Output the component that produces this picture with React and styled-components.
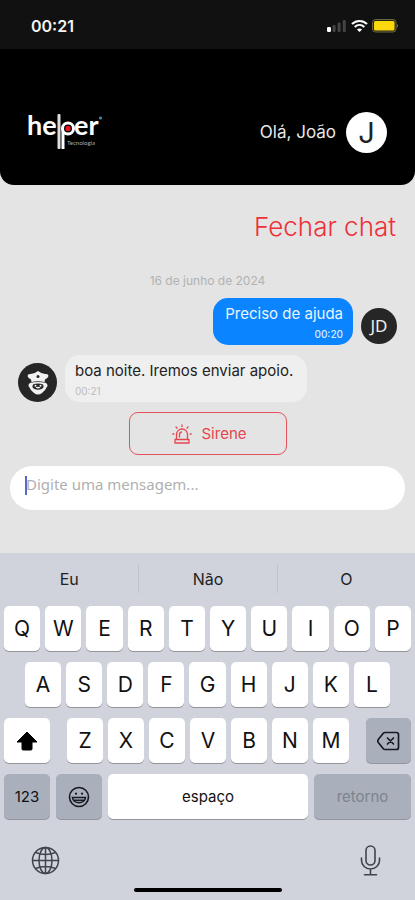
import React from "react";
import styled, { createGlobalStyle, css } from "styled-components";

const GlobalStyle = createGlobalStyle`
  * { box-sizing: border-box; }
  body {
    margin: 0;
    background: #d0d3dc;
    font-family: Inter, "Liberation Sans", sans-serif;
  }
  button, textarea { font: inherit; }
`;

const Screen = styled.div`
  display: flex;
  flex-direction: column;
  min-height: 100vh;
  background: #e4e4e4;
`;

const StatusBar = styled.div`
  display: flex;
  align-items: center;
  justify-content: space-between;
  height: 49px;
  padding: 2px 16px 0 31px;
  background: #111;
  color: #f4f4f4;
`;

const Clock = styled.time`
  font-size: 16px;
  font-weight: 600;
`;

const StatusIcons = styled.div`
  display: flex;
  align-items: center;
  gap: 4px;
`;

const Header = styled.header`
  display: flex;
  align-items: center;
  justify-content: space-between;
  height: 136px;
  padding: 30px 28px 0;
  background: #000;
  border-radius: 0 0 14px 14px;
`;

const Logo = styled.svg`
  display: block;
  overflow: visible;
  font-family: Lato, sans-serif;
`;

const Profile = styled.div`
  display: flex;
  align-items: center;
  gap: 10px;
  color: #e8e8e8;
  font-size: 17px;
`;

const Initial = styled.span`
  display: grid;
  place-items: center;
  width: 41px;
  height: 41px;
  border-radius: 50%;
  background: #fff;
  color: #222;
  font-size: 29px;
`;

const Chat = styled.main`
  display: flex;
  flex: 1;
  flex-direction: column;
  padding: 26px 10px 43px;
`;

const CloseButton = styled.button`
  align-self: flex-end;
  margin-right: 9px;
  padding: 0;
  border: 0;
  background: none;
  color: #ee3038;
  font-size: 26px;
  font-weight: 300;
  line-height: 32px;
`;

const DateLabel = styled.p`
  margin: 30px 0 9px;
  color: #b2b2b2;
  font-size: 12px;
  line-height: 16px;
  text-align: center;
`;

const Message = styled.div`
  display: flex;
  align-items: center;
  gap: 8px;
  margin-bottom: 10px;
  padding: 0 8px;
  flex-direction: ${(p) => (p.$mine ? "row-reverse" : "row")};
`;

const Bubble = styled.div`
  height: 47px;
  padding: ${(p) => (p.$mine ? "5px 10px 5px 12px" : "5px 14px 5px 10px")};
  border-radius: 15px;
  background: ${(p) => (p.$mine ? "#0a84ff" : "#efefef")};
  color: ${(p) => (p.$mine ? "#eaf4ff" : "#222")};
  font-size: 15px;
  line-height: 22px;
  text-align: ${(p) => (p.$mine ? "right" : "left")};
`;

const Sent = styled.time`
  display: block;
  color: ${(p) => (p.$mine ? "#d5eaff" : "#bdbdbd")};
  font-size: 10px;
  font-weight: ${(p) => (p.$mine ? 500 : 400)};
  line-height: 18px;
`;

const Avatar = styled.span`
  display: grid;
  flex: none;
  place-items: center;
  width: ${(p) => p.$size}px;
  height: ${(p) => p.$size}px;
  margin-top: 8px;
  border-radius: 50%;
  background: #262626;
  color: #eee;
  font-family: "Noto Sans", sans-serif;
  font-size: 17px;
  line-height: 20px;
`;

const SirenButton = styled.button`
  display: flex;
  align-items: center;
  justify-content: center;
  align-self: center;
  gap: 9px;
  width: 158px;
  height: 43px;
  padding: 0 0 0 4px;
  border: 1px solid #e4525a;
  border-radius: 9px;
  background: none;
  color: #e5464d;
  font-size: 15px;
`;

const Composer = styled.label`
  position: relative;
  display: block;
  margin-top: 11px;
`;

const MessageBox = styled.textarea`
  display: block;
  width: 100%;
  height: 44px;
  padding: 7px 16px;
  overflow: hidden;
  border: 0;
  outline: 0;
  border-radius: 22px;
  background: #fff;
  color: #222;
  font-family: "Noto Sans", sans-serif;
  font-size: 15px;
  line-height: 22px;
  resize: none;
  &::placeholder { color: #b0b0b0; opacity: 1; }
`;

const Caret = styled.span`
  position: absolute;
  top: 10px;
  left: 15px;
  width: 2px;
  height: 19px;
  background: #5868c8;
`;

const Keyboard = styled.section`
  background: #d0d3dc;
`;

const Suggestions = styled.div`
  display: grid;
  grid-template-columns: repeat(3, 1fr);
  padding: 11px 0 13px;
`;

const Suggestion = styled.button`
  height: 29px;
  padding: 0;
  border: 0;
  background: none;
  color: #222;
  font-size: 16px;
  & + & { border-left: 1px solid #bfc2cb; }
`;

const Keys = styled.div`
  display: flex;
  flex-direction: column;
  gap: 11px;
  padding: 0 4px;
`;

const KeyRow = styled.div`
  display: flex;
  gap: ${(p) => p.$gap || 5}px;
  padding: 0 ${(p) => p.$inset || 0}px;
`;

const LetterGroup = styled.div`
  display: flex;
  flex: 1;
  gap: 5px;
`;

const Key = styled.button`
  display: grid;
  place-items: center;
  height: 45px;
  padding: 0;
  border: 0;
  border-radius: 5px;
  background: ${(p) => (p.$grey ? "#a9b0bc" : "#fff")};
  box-shadow: 0 1px 0 #92959c;
  color: ${(p) => (p.$muted ? "#7d838d" : "#111")};
  font-size: ${(p) => (p.$word ? 15 : 21)}px;
  ${(p) =>
    p.$width
      ? css`flex: none; width: ${p.$width}px;`
      : css`flex: 1; min-width: 0;`}
`;

const KeyboardFooter = styled.div`
  display: flex;
  align-items: center;
  justify-content: space-between;
  padding: 25px 34px 0 31px;
`;

const IconButton = styled.button`
  display: block;
  height: 32px;
  padding: 0;
  border: 0;
  background: none;
  color: #41444a;
  svg { display: block; }
`;

const HomeBar = styled.div`
  width: 148px;
  height: 4px;
  margin: 12px auto 8px;
  border-radius: 2px;
  background: #000;
`;

function SignalIcon() {
  return (
    <svg width="20" height="14" viewBox="0 0 20 14" aria-hidden="true">
      <rect x="0" y="8" width="4" height="5" rx="1.2" fill="#fff" />
      <rect x="5.6" y="6" width="3" height="7" rx="1" fill="#444" />
      <rect x="10.6" y="3.5" width="3" height="9.5" rx="1" fill="#444" />
      <rect x="15.8" y="1" width="3" height="12" rx="1" fill="#444" />
    </svg>
  );
}

function WifiIcon() {
  return (
    <svg width="17" height="14" viewBox="0 0 17 14" fill="none" stroke="#fff" strokeWidth="2.1" aria-hidden="true">
      <path d="M1 5C5.2.9 11.8.9 16 5M3.7 8c2.8-2.6 6.8-2.6 9.6 0" />
      <path d="M8.5 13 5.9 10.4c1.5-1.3 3.7-1.3 5.2 0z" fill="#fff" stroke="none" />
    </svg>
  );
}

function BatteryIcon() {
  return (
    <svg width="27" height="14" viewBox="0 0 27 14" aria-hidden="true">
      <rect x=".5" y=".5" width="23.5" height="12.5" rx="3" fill="#28260f" stroke="#6a6744" />
      <rect x="2" y="2" width="20.5" height="9.5" rx="1.5" fill="#fbd80d" />
      <path d="M25 5q2 1.700 0 3.800z" fill="#777" />
    </svg>
  );
}

function HelperLogo() {
  return (
    <Logo width="75" height="38" viewBox="0 0 75 38" role="img" aria-label="helper Tecnologia">
      <text x="-1" y="22" fontSize="27" fontWeight="700" fill="#fff">he</text>
      <rect x="29.500" y="1" width="3" height="35" rx="1" fill="#ddd" />
      <path d="M33.500 15v21h3V21" fill="#fff" />
      <circle cx="40" cy="15.500" r="5.500" fill="none" stroke="#fff" strokeWidth="3" />
      <circle cx="40" cy="15.500" r="2.700" fill="#e81420" />
      <text x="46" y="22" fontSize="27" fontWeight="700" fill="#fff">er</text>
      <circle cx="72.500" cy="5" r="1.600" fill="#4686b5" />
      <text x="39" y="32" fontSize="6" fill="#aaa">Tecnologia</text>
    </Logo>
  );
}

function OfficerIcon() {
  return (
    <svg width="24" height="26" viewBox="0 0 24 26" aria-hidden="true">
      <path d="M1.500 6Q1.500 4 4 4q4 .3 8-3 4 3.300 8 3 2.500 0 2.500 2-1 3-3.500 3.500L18.500 12q-6.500-1.500-13 0L5 9.500Q2.500 9 1.500 6z" fill="#f1f1f1" />
      <circle cx="12" cy="6.500" r="1.500" fill="#262626" />
      <path d="M4.500 12.800q-3.500 2-1 4.700 1 3 4.500 5.500 4 3 8 0 3.500-2.500 4.500-5.500 2.500-2.700-1-4.700-7.500-1.800-15 0z" fill="#f1f1f1" />
      <path d="M7 14.500q5-2 10 0 1.500 3-1 4.200-4 2.300-8 0-2.500-1.200-1-4.200z" fill="#262626" />
      <circle cx="9.500" cy="15.700" r="1" fill="#f1f1f1" />
      <circle cx="14.500" cy="15.700" r="1" fill="#f1f1f1" />
      <path d="M9.500 17.500q2.500-1.300 5 0-2.500 2-5 0z" fill="#f1f1f1" />
    </svg>
  );
}

function SirenIcon() {
  return (
    <svg width="20" height="20" viewBox="0 0 20 20" fill="none" stroke="currentColor" strokeWidth="1.300" strokeLinecap="round" aria-hidden="true">
      <path d="M4.500 15.500V10.500a5.500 5.500 0 0 1 11 0v5" />
      <path d="M3 15.500h14v3.500H3zM7.500 13v-2.500q0-2 2-2.500" strokeLinejoin="round" />
      <path d="M10 .8v1.700M4 3l1 1.200M16 3l-1 1.200M.8 10h1M18.200 10h1" />
    </svg>
  );
}

function ShiftIcon() {
  return (
    <svg width="22" height="20" viewBox="0 0 22 20" aria-hidden="true">
      <path d="M11 1 21 11H16v7q0 1-1 1H7q-1 0-1-1v-7H1z" fill="#000" stroke="#000" strokeLinejoin="round" />
    </svg>
  );
}

function BackspaceIcon() {
  return (
    <svg width="23" height="20" viewBox="0 0 23 20" fill="none" stroke="#171a20" strokeWidth="1.700" strokeLinejoin="round" strokeLinecap="round" aria-hidden="true">
      <path d="M8 1.500h11.500q2 0 2 2v13q0 2-2 2H8q-1 0-1.700-.8L1.300 11.500q-1-1.500 0-3L6.300 2.300Q7 1.500 8 1.500z" />
      <path d="m10.500 7 6 6m0-6-6 6" />
    </svg>
  );
}

function SmileIcon() {
  return (
    <svg width="22" height="22" viewBox="0 0 22 22" fill="none" stroke="#171a20" strokeWidth="1.600" aria-hidden="true">
      <circle cx="11" cy="11" r="9.500" />
      <path d="M4.500 11.500h13c-.5 7-12.500 7-13 0z" />
      <path d="M5.500 14.300h11" />
      <circle cx="8" cy="7.700" r="1.100" fill="#171a20" stroke="none" />
      <circle cx="14" cy="7.700" r="1.100" fill="#171a20" stroke="none" />
    </svg>
  );
}

function GlobeIcon() {
  return (
    <svg width="29" height="29" viewBox="0 0 29 29" fill="none" stroke="currentColor" strokeWidth="1.500" aria-hidden="true">
      <circle cx="14.500" cy="14.500" r="13" />
      <ellipse cx="14.500" cy="14.500" rx="6.500" ry="13" />
      <path d="M14.500 1.500v26M1.500 14.500h26M4.500 6.500q10 4 20 0M4.500 22.500q10-4 20 0" />
    </svg>
  );
}

function MicIcon() {
  return (
    <svg width="21" height="31" viewBox="0 0 21 31" fill="none" stroke="currentColor" strokeWidth="1.600" strokeLinecap="round" aria-hidden="true">
      <rect x="6" y="1" width="9" height="19" rx="4.500" />
      <path d="M1.500 13v2.500a9 8.500 0 0 0 18 0V13M10.500 24v5.500M4.500 29.700h12" />
    </svg>
  );
}

const letterKeys = (letters) =>
  letters.split("").map((letter) => <Key key={letter} type="button">{letter}</Key>);

export default function App() {
  return (
    <Screen>
      <GlobalStyle />
      <StatusBar>
        <Clock>00:21</Clock>
        <StatusIcons>
          <SignalIcon />
          <WifiIcon />
          <BatteryIcon />
        </StatusIcons>
      </StatusBar>
      <Header>
        <HelperLogo />
        <Profile>
          Olá, João
          <Initial>J</Initial>
        </Profile>
      </Header>
      <Chat>
        <CloseButton type="button">Fechar chat</CloseButton>
        <DateLabel>16 de junho de 2024</DateLabel>
        <Message $mine>
          <Avatar $size={36}>JD</Avatar>
          <Bubble $mine>
            Preciso de ajuda
            <Sent $mine>00:20</Sent>
          </Bubble>
        </Message>
        <Message>
          <Avatar $size={39}><OfficerIcon /></Avatar>
          <Bubble>
            boa noite. Iremos enviar apoio.
            <Sent>00:21</Sent>
          </Bubble>
        </Message>
        <SirenButton type="button">
          <SirenIcon />
          Sirene
        </SirenButton>
        <Composer>
          <MessageBox rows={1} aria-label="Mensagem" placeholder="Digite uma mensagem..." />
          <Caret />
        </Composer>
      </Chat>
      <Keyboard aria-label="Teclado">
        <Suggestions>
          <Suggestion type="button">Eu</Suggestion>
          <Suggestion type="button">Não</Suggestion>
          <Suggestion type="button">O</Suggestion>
        </Suggestions>
        <Keys>
          <KeyRow>{letterKeys("QWERTYUIOP")}</KeyRow>
          <KeyRow $inset={21}>{letterKeys("ASDFGHJKL")}</KeyRow>
          <KeyRow $gap={17}>
            <Key type="button" $width={46} aria-label="Maiúsculas"><ShiftIcon /></Key>
            <LetterGroup>{letterKeys("ZXCVBNM")}</LetterGroup>
            <Key type="button" $width={45} $grey aria-label="Apagar"><BackspaceIcon /></Key>
          </KeyRow>
          <KeyRow $gap={6}>
            <Key type="button" $width={46} $grey $word>123</Key>
            <Key type="button" $width={46} $grey aria-label="Emoji"><SmileIcon /></Key>
            <Key type="button" $word>espaço</Key>
            <Key type="button" $width={97} $grey $word $muted>retorno</Key>
          </KeyRow>
        </Keys>
        <KeyboardFooter>
          <IconButton type="button" aria-label="Idioma"><GlobeIcon /></IconButton>
          <IconButton type="button" aria-label="Ditado"><MicIcon /></IconButton>
        </KeyboardFooter>
        <HomeBar />
      </Keyboard>
    </Screen>
  );
}
